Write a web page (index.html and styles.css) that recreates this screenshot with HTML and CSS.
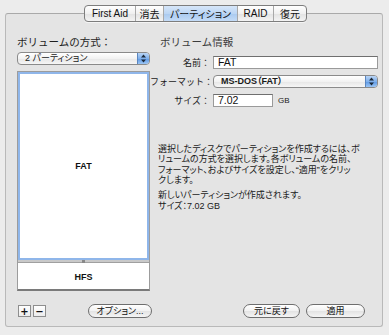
FILE: index.html
```html
<!DOCTYPE html>
<html lang="ja">
<head>
  <meta charset="UTF-8">
  <title>ディスクユーティリティ - パーティション</title>
  <link rel="stylesheet" href="styles.css">
</head>
<body>

  <div class="window">
    <div class="tabs">
      <span class="tab t-aid">First Aid</span>
      <span class="tab t-erase">消去</span>
      <span class="tab t-part active">パーティション</span>
      <span class="tab t-raid">RAID</span>
      <span class="tab t-restore">復元</span>
    </div>

    <div class="panel">
      <div class="col-left">
        <h2 class="head">ボリュームの方式：</h2>
        <div class="popup">
          <span class="popup-text">2 パーティション</span>
          <span class="arrows">
            <svg width="7" height="9" viewBox="0 0 7 9"><path d="M3.5 0.5 L6 3.5 H1 Z M3.5 8.5 L6 5.5 H1 Z" fill="#1c2a3a"/></svg>
          </span>
        </div>

        <div class="map">
          <div class="part selected">FAT</div>
          <div class="splitter"><span class="grip"></span></div>
          <div class="part">HFS</div>
        </div>

        <div class="left-actions">
          <div class="sq-group">
            <button class="sq">+</button>
            <button class="sq">−</button>
          </div>
          <button class="pill options">オプション...</button>
        </div>
      </div>

      <div class="col-right">
        <h2 class="head info">ボリューム情報</h2>

        <div class="form">
          <label>名前：</label>
          <div class="field">FAT</div>

          <label>フォーマット：</label>
          <div class="popup">
            <span class="popup-text bold">MS-DOS（FAT）</span>
            <span class="arrows">
              <svg width="7" height="9" viewBox="0 0 7 9"><path d="M3.5 0.5 L6 3.5 H1 Z M3.5 8.5 L6 5.5 H1 Z" fill="#1c2a3a"/></svg>
            </span>
          </div>

          <label>サイズ：</label>
          <div class="size-row">
            <div class="field short">7.02</div>
            <span class="unit">GB</span>
          </div>
        </div>

        <div class="desc">
          <p>選択したディスクでパーティションを作成するには、ボ<br>リュームの方式を選択します。各ボリュームの名前、<br>フォーマット、およびサイズを設定し、“適用”をクリッ<br>クします。</p>
          <p>新しいパーティションが作成されます。<br>サイズ：7.02 GB</p>
        </div>

        <div class="actions">
          <button class="pill revert">元に戻す</button>
          <button class="pill apply">適用</button>
        </div>
      </div>
    </div>
  </div>

</body>
</html>
```

FILE: styles.css
```css
* {
  margin: 0;
  padding: 0;
  box-sizing: border-box;
}

body {
  background: #ececec;
  font-family: "Liberation Sans", "Noto Sans CJK JP", sans-serif;
  color: #1a1a1a;
}

.window {
  width: 389px;
  height: 335px;
  padding-top: 5px;
  display: flex;
  flex-direction: column;
}

/* segmented tab control */
.tabs {
  position: relative;
  z-index: 1;
  display: flex;
  align-self: center;
  height: 17px;
  margin-left: 2px;
  border: 1px solid #7d7d7d;
  border-radius: 4px;
  background: linear-gradient(#ffffff, #f0f0f0 50%, #e2e2e2 51%, #f4f4f4);
  overflow: hidden;
  box-shadow: 0 1px 0 rgba(255, 255, 255, 0.6);
}

.tab {
  display: flex;
  align-items: center;
  justify-content: center;
  font-size: 10px;
  color: #111;
  border-left: 1px solid #a8a8a8;
  white-space: nowrap;
}

.tab:first-child {
  border-left: none;
}

.t-aid { width: 50px; }
.t-erase { width: 28px; }
.t-part { width: 74px; font-feature-settings: "palt"; }
.t-raid { width: 36px; }
.t-restore { width: 33px; }

.tab.active {
  background: linear-gradient(#d6e6f9, #bcd6f4 50%, #a9c9ef 51%, #c4dcf7);
}

.panel {
  margin: -9px 6px 0 5px;
  height: 314px;
  border: 1px solid #b9b9b9;
  border-top-color: #a9a9a9;
  border-radius: 3px;
  background: #e4e4e4;
  padding: 21px 4px 8px 11px;
  display: flex;
}

.head {
  font-size: 10.5px;
  font-weight: normal;
  line-height: 14px;
  color: #1e1e1e;
}

.head.info {
  color: #3c3c3c;
  padding-left: 10px;
}

.col-left {
  width: 133px;
  display: flex;
  flex-direction: column;
}

.col-right {
  flex: 1;
  display: flex;
  flex-direction: column;
}

/* popup menus */
.popup {
  height: 13px;
  display: flex;
  align-items: center;
  border: 1px solid #8a8a8a;
  border-radius: 4px;
  background: linear-gradient(#ffffff, #f2f2f2 50%, #e6e6e6 51%, #f6f6f6);
  overflow: hidden;
}

.col-left .popup {
  margin-top: 3px;
}

.popup-text {
  flex: 1;
  font-size: 9px;
  font-feature-settings: "palt";
  padding-left: 7px;
  line-height: 11px;
  white-space: nowrap;
}

.popup-text.bold {
  font-weight: bold;
}

.arrows {
  width: 12px;
  height: 100%;
  display: flex;
  align-items: center;
  justify-content: center;
  border-left: 1px solid #5a86c0;
  background: linear-gradient(#b9d4f4, #7fb0ec 50%, #5c97e3 51%, #9cc6f5);
}

/* partition map */
.map {
  margin-top: 6px;
  height: 220px;
  border: 1px solid #9c9c9c;
  border-bottom: 2px solid #7a7a7a;
  background: #fff;
  display: flex;
  flex-direction: column;
}

.part {
  display: flex;
  align-items: center;
  justify-content: center;
  font-size: 9px;
  font-weight: bold;
  color: #111;
}

.part.selected {
  flex: 1;
  border: 2px solid #8fb6ea;
}

.part:last-child {
  height: 26px;
  padding-top: 2px;
}

.splitter {
  height: 3px;
  background: #c9c9c9;
  border-bottom: 1px solid #a0a0a0;
  display: flex;
  justify-content: center;
}

.grip {
  width: 3px;
  height: 3px;
  background: #888;
}

.left-actions {
  margin-top: auto;
  height: 14px;
  display: flex;
  align-items: center;
  justify-content: space-between;
  margin-right: -2px;
  padding-left: 1px;
}

.sq-group {
  display: flex;
  gap: 2px;
}

.sq {
  width: 13px;
  height: 12px;
  border: 1px solid #8e8e8e;
  background: linear-gradient(#ffffff, #ececec);
  font-family: "DejaVu Sans", sans-serif;
  font-size: 10px;
  font-weight: bold;
  line-height: 9px;
  color: #111;
}

.pill {
  height: 14px;
  border: 1px solid #6e6e6e;
  border-radius: 7px;
  background: linear-gradient(#ffffff, #f1f1f1 50%, #e3e3e3 51%, #f5f5f5);
  font-family: "Liberation Sans", "Noto Sans CJK JP", sans-serif;
  font-feature-settings: "palt";
  font-size: 9px;
  line-height: 12px;
  color: #111;
}

.options {
  width: 64px;
}

/* volume info form */
.form {
  margin-top: 7px;
  display: grid;
  grid-template-columns: 60px 1fr;
  column-gap: 3px;
  row-gap: 6px;
  align-items: center;
}

.form label {
  font-size: 9px;
  text-align: right;
  white-space: nowrap;
  color: #1a1a1a;
}

.field {
  height: 13px;
  border: 1px solid #9a9a9a;
  border-top-color: #6f6f6f;
  background: #fff;
  font-size: 10.5px;
  line-height: 11px;
  padding-left: 4px;
  color: #111;
}

.size-row {
  display: flex;
  align-items: center;
}

.field.short {
  width: 60px;
}

.unit {
  font-size: 8px;
  margin-left: 5px;
}

.desc {
  margin: 37px 0 0 8px;
  font-size: 9px;
  font-feature-settings: "palt";
  line-height: 10.4px;
  color: #1a1a1a;
}

.desc p + p {
  margin-top: 4.5px;
}

.actions {
  margin-top: auto;
  display: flex;
  justify-content: flex-end;
  gap: 6px;
  padding-right: 13px;
}

.revert {
  width: 57px;
}

.apply {
  width: 59px;
}
```
